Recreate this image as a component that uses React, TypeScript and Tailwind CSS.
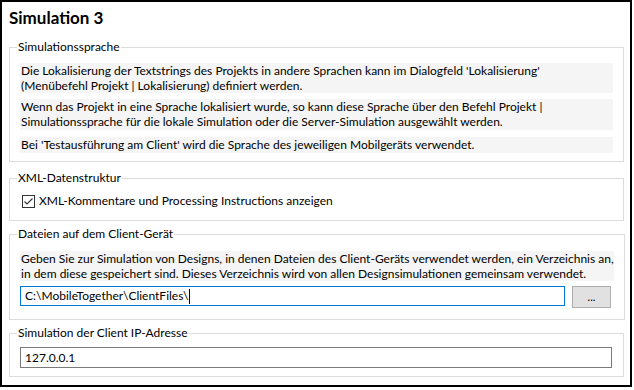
import React from "react";

const font = { fontFamily: 'Lato, "Noto Sans", sans-serif' };

function Group({ label, children, className }: { label: string; children: React.ReactNode; className?: string }) {
  return (
    <fieldset className={"w-[615px] border border-[#dcdcdc] px-[10px] " + (className ?? "")}>
      <legend className="-ml-[3px] px-[1px] text-[12px] leading-[16px] text-black">{label}</legend>
      {children}
    </fieldset>
  );
}

export default function App() {
  return (
    <div className="w-[634px] h-[390px] bg-white" style={font}>
      <div className="w-[632px] h-[387px] border-2 border-black px-[7px] text-[12px] text-black whitespace-nowrap">
        <div className="pt-[6px] h-[28px] text-[17px] leading-[20px] font-bold">Simulation 3</div>
        <Group label="Simulationssprache" className="mt-[9px] pb-[8px]">
          <div className="mt-[8px] flex flex-col">
            <div className="bg-[#f5f5f5] pl-[1px] leading-[15px] h-[30px]">
              Die Lokalisierung der Textstrings des Projekts in andere Sprachen kann im Dialogfeld 'Lokalisierung'
              <br />
              (Menübefehl Projekt | Lokalisierung) definiert werden.
            </div>
            <div className="mt-[6px] bg-[#f5f5f5] pl-[1px] leading-[15px] h-[31px]">
              Wenn das Projekt in eine Sprache lokalisiert wurde, so kann diese Sprache über den Befehl Projekt |
              <br />
              Simulationssprache für die lokale Simulation oder die Server-Simulation ausgewählt werden.
            </div>
            <div className="mt-[7px] bg-[#f5f5f5] pl-[1px] leading-[16px] h-[16px]">
              Bei 'Testausführung am Client' wird die Sprache des jeweiligen Mobilgeräts verwendet.
            </div>
          </div>
        </Group>
        <Group label="XML-Datenstruktur" className="mt-[8px] h-[51px]">
          <div className="mt-[7px] flex items-center gap-[4px]">
            <svg width="13" height="13" viewBox="0 0 13 13" className="ml-[2px]">
              <rect x="0.5" y="0.5" width="12" height="12" fill="white" stroke="#333333" />
              <path d="M2.5 6.5 L5 9 L10.5 3.5" fill="none" stroke="#333333" strokeWidth="1.1" />
            </svg>
            <span className="leading-[16px]">XML-Kommentare und Processing Instructions anzeigen</span>
          </div>
        </Group>
        <Group label="Dateien auf dem Client-Gerät" className="mt-[5px] h-[94px]">
          <div className="mt-[9px] bg-[#f5f5f5] pl-[1px] leading-[15px] h-[30px]">
            Geben Sie zur Simulation von Designs, in denen Dateien des Client-Geräts verwendet werden, ein Verzeichnis an,
            <br />
            in dem diese gespeichert sind. Dieses Verzeichnis wird von allen Designsimulationen gemeinsam verwendet.
          </div>
          <div className="mt-[5px] flex items-start gap-[7px]">
            <div className="w-[545px] h-[20px] border border-[#0078d7] flex items-center pl-[4px] leading-[16px]">
              <span>C:\MobileTogether\ClientFiles\</span>
              <span className="inline-block w-[1px] h-[15px] bg-black ml-[1px]" />
            </div>
            <div className="w-[39px] h-[22px] bg-[#e1e1e1] border border-[#adadad] flex items-center justify-center text-[11px] leading-[12px]">
              ...
            </div>
          </div>
        </Group>
        <Group label="Simulation der Client IP-Adresse" className="mt-[5px] h-[52px]">
          <div className="mt-[6px] w-[592px] h-[21px] border border-[#7a7a7a] flex items-center pl-[4px] leading-[16px]">
            127.0.0.1
          </div>
        </Group>
      </div>
    </div>
  );
}
